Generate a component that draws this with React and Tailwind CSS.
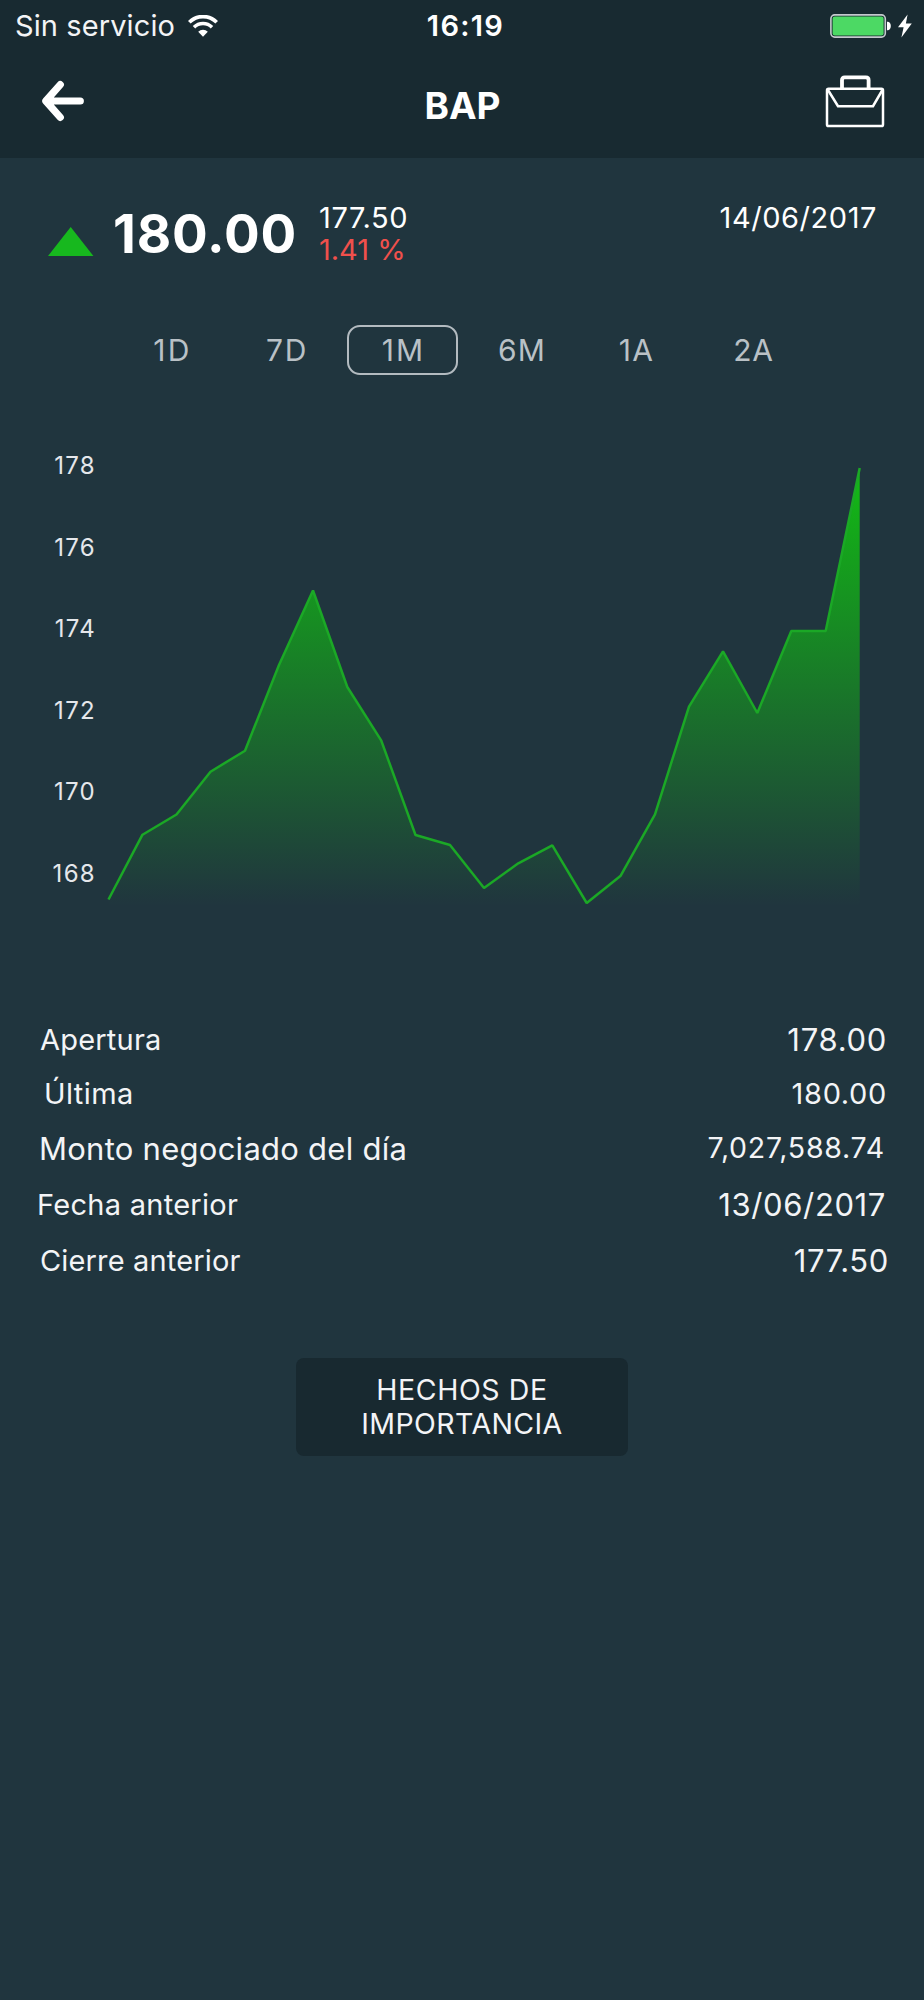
import React, { useState } from "react";
import clsx from "clsx";

const ranges = [
  { label: "1D", className: "tracking-[2.2px]" },
  { label: "7D", className: "tracking-[1.6px] pr-[2px]" },
  { label: "1M", className: "tracking-[2px]" },
  { label: "6M", className: "tracking-[1.2px]" },
  { label: "1A", className: "tracking-[1.4px] pr-[2px]" },
  { label: "2A", className: "tracking-[0.7px] pr-[2px]" },
];

const axisLabels = [178, 176, 174, 172, 170, 168];

// [x, y] of every session, relative to the chart area
const points = [
  [2.5, 439.5],
  [36.5, 374.7],
  [70.5, 354.5],
  [104.5, 311.7],
  [139, 290.7],
  [173, 205],
  [207, 130.5],
  [241.3, 227],
  [275.3, 280.7],
  [309.5, 375],
  [344, 385],
  [378, 428],
  [412.3, 403.3],
  [446.3, 385.3],
  [480.7, 443],
  [514.7, 415.7],
  [549, 354.3],
  [583, 246.7],
  [617, 191.3],
  [651.3, 253],
  [685.3, 171],
  [719.7, 171],
  [753.7, 8],
];

const details = [
  {
    label: "Apertura",
    value: "178.00",
    row: "h-[54px] pl-[40px] pr-[37px]",
    labelClass: "text-[29px] tracking-[0.2px]",
    valueClass: "text-[31px] tracking-[0.7px]",
  },
  {
    label: "Última",
    value: "180.00",
    row: "h-[54px] pl-[44px] pr-[37px]",
    labelClass: "text-[29px] tracking-[0.4px]",
    valueClass: "text-[29px] tracking-[0.65px]",
  },
  {
    label: "Monto negociado del día",
    value: "7,027,588.74",
    row: "h-[56px] pl-[39px] pr-[39px]",
    labelClass: "text-[31px] tracking-[0.26px]",
    valueClass: "text-[28.5px] tracking-[0.75px]",
  },
  {
    label: "Fecha anterior",
    value: "13/06/2017",
    row: "h-[56px] pl-[37px] pr-[38px]",
    labelClass: "text-[29px] tracking-[0.28px]",
    valueClass: "text-[31px] tracking-[0.62px]",
  },
  {
    label: "Cierre anterior",
    value: "177.50",
    row: "h-[56px] pl-[40px] pr-[35px]",
    labelClass: "text-[29px] tracking-[0.16px]",
    valueClass: "text-[31px] tracking-[0.65px]",
  },
];

const WifiIcon = () => (
  <svg width="30" height="22" viewBox="0 0 30 22" fill="none">
    <path d="M1.3 7.2 A19.4 19.4 0 0 1 28.7 7.2" stroke="white" strokeWidth="3.7" />
    <path d="M6 12.2 A12.7 12.7 0 0 1 24 12.2" stroke="white" strokeWidth="3.5" />
    <path d="M10.2 16.8 A6.9 6.9 0 0 1 19.8 16.8 L15 21.8 Z" fill="white" />
  </svg>
);

const BatteryIcon = () => (
  <svg width="62" height="24" viewBox="0 0 62 24" fill="none">
    <rect x="0.9" y="0.9" width="54.4" height="22.2" rx="3.8" stroke="#c4cacd" strokeWidth="1.6" />
    <rect x="2.6" y="2.6" width="51" height="18.8" rx="2.2" fill="#4cd964" />
    <path d="M57 7.8 h1 q2.8 0.8 2.8 4.2 t-2.8 4.2 h-1 z" fill="white" />
  </svg>
);

const BoltIcon = () => (
  <svg width="14" height="24" viewBox="0 0 14 24" fill="white">
    <path d="M9.6 0.4 L0 13.2 H5.6 L3.4 23.4 L13.8 9.6 H7.9 Z" />
  </svg>
);

const BackIcon = () => (
  <svg width="44" height="42" viewBox="0 0 44 42" fill="none">
    <path
      d="M39.3 21 H5.5 M19.3 4.6 L4.8 21 L19.3 37.4"
      stroke="white"
      strokeWidth="7.2"
      strokeLinecap="round"
      strokeLinejoin="round"
    />
  </svg>
);

const BriefcaseIcon = () => (
  <svg width="60" height="54" viewBox="0 0 60 54" fill="none" stroke="white">
    <path d="M17 14 V6.1 Q17 3.4 19.7 3.4 H40.9 Q43.6 3.4 43.6 6.1 V14" strokeWidth="3.8" />
    <rect x="2" y="14.8" width="56" height="37.2" rx="1.6" strokeWidth="2.5" />
    <path d="M3 16 L13 32.2 H48 L57.4 16" strokeWidth="2.5" />
  </svg>
);

const StatusBar = () => (
  <div className="grid grid-cols-3 items-center h-[51px] pl-[15px] pr-[12px]">
    <div className="flex items-center gap-[13px]">
      <span className="text-[29px] tracking-[0.1px] text-gray-100">
        Sin servicio
      </span>
      <WifiIcon />
    </div>
    <span className="pl-[4px] text-center text-[29px] font-semibold tracking-[1.3px]">
      16:19
    </span>
    <div className="flex items-center justify-end gap-[6px]">
      <BatteryIcon />
      <BoltIcon />
    </div>
  </div>
);

const NavBar = () => (
  <div className="grid grid-cols-3 items-center h-[107px] pl-[41px] pr-[39px]">
    <button type="button" className="justify-self-start mb-[7px]">
      <BackIcon />
    </button>
    <h1 className="pt-px pr-px text-center text-[37px] font-bold">BAP</h1>
    <button type="button" className="justify-self-end mb-[7px]">
      <BriefcaseIcon />
    </button>
  </div>
);

const Chart = () => {
  const line = points.map((p) => p.join(",")).join(" ");

  return (
    <div className="flex mt-[50px] pl-[52px]">
      <div className="flex flex-col w-[54px] pr-[10px] text-right text-[24px] tracking-[1.3px] text-gray-200">
        {axisLabels.map((label) => (
          <span key={label} className="h-[81.5px] leading-[81.5px]">
            {label}
          </span>
        ))}
      </div>
      <svg className="mt-[35px]" width="770" height="454" viewBox="0 0 770 454" fill="none">
        <defs>
          <linearGradient id="area" x1="0" y1="8" x2="0" y2="446" gradientUnits="userSpaceOnUse">
            <stop offset="0" stopColor="#12bb14" />
            <stop offset="1" stopColor="#12bb14" stopOpacity="0" />
          </linearGradient>
        </defs>
        <polygon points={`2.5,446 ${line} 753.7,446`} fill="url(#area)" />
        <polyline points={line} stroke="#1ba826" strokeWidth="2.5" strokeLinejoin="bevel" />
      </svg>
    </div>
  );
};

const App = () => {
  const [range, setRange] = useState("1M");

  return (
    <div className="w-[924px] min-h-[2000px] bg-[#20353e] text-white font-['Inter',sans-serif] leading-none">
      <header className="bg-[#182a31]">
        <StatusBar />
        <NavBar />
      </header>

      <section className="flex items-start pt-[44px] pl-[48px] pr-[47px]">
        <svg className="mt-[25px]" width="46" height="29" viewBox="0 0 46 29">
          <path d="M22.7 0 L45.4 29 H0 Z" fill="#17b81e" />
        </svg>
        <span className="ml-[19px] pt-px text-[53px] leading-[63px] font-bold tracking-[0.8px]">
          180.00
        </span>
        <div className="flex flex-col ml-[22px] text-[29px] leading-[32px]">
          <span className="tracking-[0.65px]">177.50</span>
          <span className="text-[#f0504c]">1.41 %</span>
        </div>
        <span className="ml-auto text-[29px] leading-[32px] tracking-[0.55px]">
          14/06/2017
        </span>
      </section>

      <nav className="grid grid-cols-[111px_120px_111px_126px_105px_129px] mt-[59px] pl-[116px]">
        {ranges.map((r) => (
          <button
            key={r.label}
            type="button"
            onClick={() => setRange(r.label)}
            className={clsx(
              "h-[50px] pl-[2px] rounded-[13px] border-2 text-[30px] text-[#b9c1c6]",
              r.className,
              range === r.label ? "border-[#b3bbc0]" : "border-transparent"
            )}
          >
            {r.label}
          </button>
        ))}
      </nav>

      <Chart />

      <section className="mt-[98px] text-gray-100">
        {details.map((d) => (
          <div
            key={d.label}
            className={clsx("flex items-center justify-between", d.row)}
          >
            <span className={d.labelClass}>{d.label}</span>
            <span className={d.valueClass}>{d.value}</span>
          </div>
        ))}
      </section>

      <button
        type="button"
        className="flex flex-col items-center justify-center mt-[70px] mx-auto w-[332px] h-[98px] rounded-lg bg-[#182930] text-[28.5px] leading-[34px] text-gray-100"
      >
        <span className="tracking-[0.6px]">HECHOS DE</span>
        <span className="tracking-[0.4px]">IMPORTANCIA</span>
      </button>
    </div>
  );
};

export default App;
